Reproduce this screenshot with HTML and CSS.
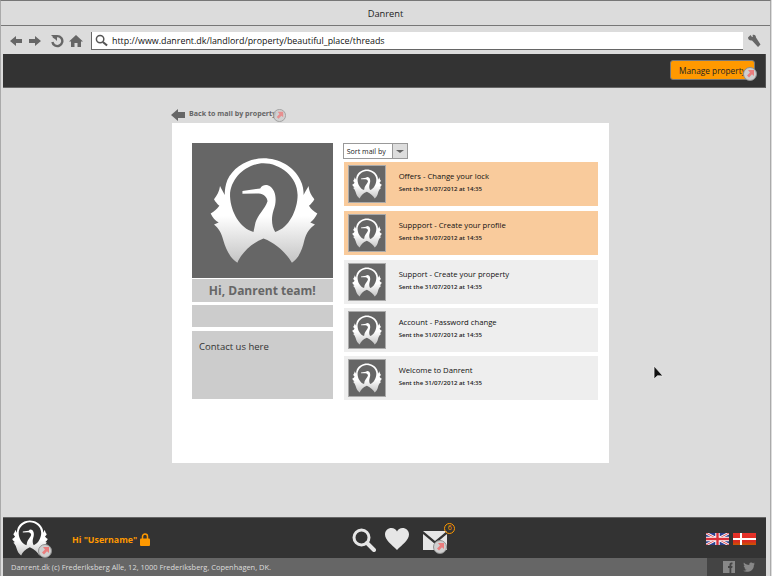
FILE: index.html
```html
<!DOCTYPE html>
<html lang="en">
<head>
<meta charset="utf-8">
<title>Danrent</title>
<link rel="stylesheet" href="styles.css">
</head>
<body>
<svg class="defs" width="0" height="0" aria-hidden="true">
  <defs>
    <linearGradient id="swanfill" x1="0" y1="0" x2="0" y2="1">
      <stop offset="0" stop-color="#fff"/>
      <stop offset="0.55" stop-color="#fff"/>
      <stop offset="1" stop-color="#c4c4c4"/>
    </linearGradient>
    <symbol id="swan" viewBox="90 66 323 320">
      <path fill="url(#swanfill)" fill-rule="evenodd" d="M250 70C205 70 160 95 142 135C136 150 134 165 134 180C130 170 124 162 120 153C118 170 110 182 102 192C106 200 112 206 118 212C110 222 102 230 92 235C98 248 106 256 116 262L102 268C116 280 124 292 130 316C138 345 152 370 172 382C182 358 208 326 250 310C292 326 322 360 335 382C354 370 366 345 372 316C378 292 388 280 404 268L390 262C398 256 405 246 411 235C402 230 392 222 386 212C392 206 398 200 402 192C394 182 386 170 385 153C380 162 374 170 370 180C370 165 368 150 360 135C342 95 295 70 250 70ZM250 85C300 85 352 125 352 180C352 225 325 280 285 290C275 275 272 250 280 225C288 205 288 185 282 170C274 150 252 142 240 160L187 168L187 176L236 175C250 175 262 188 262 198C255 220 232 240 226 262L220 290C180 280 152 230 150 185C148 130 200 85 250 85Z"/>
    </symbol>
    <symbol id="linkbadge" viewBox="0 0 14 14">
      <circle cx="7" cy="7" r="6.5" fill="#cfcfcf" stroke="#8f8f8f"/>
      <path fill="#ea7d7d" d="M5 3h6v6l-2-1.700-3 3.200-2-2 3-3.100z"/>
    </symbol>
  </defs>
</svg>
<div class="window">
  <header class="titlebar">Danrent</header>
  <div class="toolbar">
    <svg class="tool" viewBox="0 0 14 14"><path fill="#666" d="M1 7l6-5v3h6v4H7v3z"/></svg>
    <svg class="tool" viewBox="0 0 14 14"><path fill="#666" d="M13 7L7 2v3H1v4h6v3z"/></svg>
    <svg class="tool tool-gap" viewBox="0 0 14 14"><path fill="none" stroke="#666" stroke-width="2.400" d="M3.400 4a5 5 0 1 1-1 4"/><path fill="#666" d="M1 1h6v6z"/></svg>
    <svg class="tool" viewBox="0 0 14 14"><path fill="#666" d="M7 1L0 7.500h2V13h3.500V9h3v4H12V7.500h2z"/></svg>
    <div class="address">
      <svg class="addr-icon" viewBox="0 0 14 14"><circle cx="5.500" cy="5.500" r="4" fill="none" stroke="#555" stroke-width="1.600"/><path stroke="#555" stroke-width="2.200" d="M8.500 8.500l4.500 4"/></svg>
      <span>http://www.danrent.dk/landlord/property/beautiful_place/threads</span>
    </div>
    <svg class="wrench" viewBox="0 0 14 14"><path fill="#666" d="M1 3.500L3.500 1 5 3l1-.5L5.500 1c2-.8 3.500.5 3.500 2.500L13.500 10.500 11 13 5 6.500C3 7 1 5.500 1 3.500z"/></svg>
  </div>
  <div class="topbar">
    <button class="manage">Manage property<svg class="badge badge-manage"><use href="#linkbadge"/></svg></button>
  </div>
  <main class="stage">
    <div class="column">
      <a class="back">
        <svg class="back-arrow" viewBox="0 0 14 12"><path fill="#666" d="M0 6l7-6v3h7v6H7v3z"/></svg>
        <span class="back-label">Back to mail by property</span>
        <svg class="badge badge-back"><use href="#linkbadge"/></svg>
      </a>
      <section class="card">
        <aside class="side">
          <div class="portrait"><svg class="portrait-swan"><use href="#swan"/></svg></div>
          <div class="hello">Hi, Danrent team!</div>
          <div class="blank"></div>
          <div class="contact">Contact us here</div>
        </aside>
        <div class="mail">
          <div class="sort"><span class="sort-label">Sort mail by</span><span class="sort-btn"><i class="caret"></i></span></div>
          <ul class="threads">
            <li class="thread unread"><div class="thumb"><svg class="thumb-swan"><use href="#swan"/></svg></div><div class="thread-text"><div class="subject">Offers - Change your lock</div><div class="sent">Sent the 31/07/2012 at 14:35</div></div></li>
            <li class="thread unread"><div class="thumb"><svg class="thumb-swan"><use href="#swan"/></svg></div><div class="thread-text"><div class="subject">Suppport - Create your profile</div><div class="sent">Sent the 31/07/2012 at 14:35</div></div></li>
            <li class="thread"><div class="thumb"><svg class="thumb-swan"><use href="#swan"/></svg></div><div class="thread-text"><div class="subject">Support - Create your property</div><div class="sent">Sent the 31/07/2012 at 14:35</div></div></li>
            <li class="thread"><div class="thumb"><svg class="thumb-swan"><use href="#swan"/></svg></div><div class="thread-text"><div class="subject">Account - Password change</div><div class="sent">Sent the 31/07/2012 at 14:35</div></div></li>
            <li class="thread"><div class="thumb"><svg class="thumb-swan"><use href="#swan"/></svg></div><div class="thread-text"><div class="subject">Welcome to Danrent</div><div class="sent">Sent the 31/07/2012 at 14:35</div></div></li>
          </ul>
        </div>
      </section>
    </div>
    <svg class="cursor" viewBox="0 0 12 16"><path fill="#111" stroke="#eee" stroke-width="0.800" d="M1 1v13l3.500-3.200 5.500.2z"/></svg>
  </main>
  <footer class="footer">
    <div class="footer-main">
      <div class="footer-logo"><svg class="footer-swan"><use href="#swan"/></svg><svg class="badge badge-logo"><use href="#linkbadge"/></svg></div>
      <div class="greeting">Hi "Username"</div>
      <svg class="lock" viewBox="0 0 10 13"><path fill="none" stroke="#f90" stroke-width="1.500" d="M2.500 6V3.500a2.500 2.500 0 0 1 5 0V6"/><rect y="5.500" width="10" height="7.500" rx="1" fill="#f90"/></svg>
      <nav class="actions">
        <svg class="act-search" viewBox="0 0 24 24"><circle cx="9.500" cy="9.500" r="7.500" fill="none" stroke="#e6e6e6" stroke-width="3"/><path stroke="#e6e6e6" stroke-width="4" stroke-linecap="round" d="M15 15l7 7"/></svg>
        <svg class="act-heart" viewBox="0 0 24 22"><path fill="#e6e6e6" d="M12 22C7 17 0 12 0 6.500 0 2.500 3 0 6.500 0 9 0 11 1.500 12 3.500 13 1.500 15 0 17.500 0 21 0 24 2.500 24 6.500 24 12 17 17 12 22z"/></svg>
        <div class="act-mail">
          <svg class="envelope" viewBox="0 0 24 19"><path fill="#e6e6e6" d="M0 0h24L12 10zM0 3l12 10L24 3v16H0z"/></svg>
          <span class="count">6</span>
          <svg class="badge badge-mail"><use href="#linkbadge"/></svg>
        </div>
      </nav>
      <div class="flags">
        <svg class="flag" viewBox="0 0 23 12"><rect width="23" height="12" fill="#2b3f8f"/><path stroke="#fff" stroke-width="2.600" d="M0 0l23 12M23 0L0 12"/><path stroke="#d8303a" stroke-width="0.900" d="M0 0l23 12M23 0L0 12"/><path stroke="#fff" stroke-width="4.400" d="M11.500 0v12M0 6h23"/><path stroke="#d8303a" stroke-width="2.400" d="M11.500 0v12M0 6h23"/></svg>
        <svg class="flag" viewBox="0 0 23 12"><defs><linearGradient id="dk" x1="0" y1="0" x2="0" y2="1"><stop offset="0" stop-color="#e8342c"/><stop offset="0.7" stop-color="#d92a20"/><stop offset="1" stop-color="#c85a00"/></linearGradient></defs><rect width="23" height="12" fill="url(#dk)"/><path stroke="#fff" stroke-width="2" d="M8 0v12M0 6h23"/></svg>
      </div>
    </div>
    <div class="footer-strip">
      <div class="address-line">Danrent.dk (c) Frederiksberg Alle, 12, 1000 Frederiksberg, Copenhagen, DK.</div>
      <div class="social">
        <svg class="fb" viewBox="0 0 12 12"><rect width="12" height="12" fill="#888"/><path fill="#444" d="M6.500 12V7H5V5h1.500V3.500C6.500 2 7.500 1.500 9.500 1.500V3.300C8.500 3.300 8.300 3.500 8.300 4V5h1.200L9.200 7H8.300v5z"/></svg>
        <svg class="tw" viewBox="0 0 12 10"><path fill="#888" d="M12 1.500l-1.400.4.900-1.400-1.500.7C9 0 7 .3 6.500 1.500 6.200 2.200 6.300 2.800 6.300 3 4 3 2 2 .9.500 .3 2 .8 3.200 1.800 4L.7 3.700c0 1.200 1 2.200 2 2.500H1.600c.3 1 1.200 1.500 2.200 1.600C2.800 8.600 1.400 9 0 8.800 4 11 11 9.500 10.900 3z"/></svg>
      </div>
    </div>
  </footer>
</div>
</body>
</html>
```
FILE: styles.css
```css
* { box-sizing: border-box; }
html, body { margin: 0; padding: 0; }
body {
  width: 772px;
  height: 576px;
  overflow: hidden;
  background: #dcdcdc;
  font-family: "Open Sans", sans-serif;
  color: #222;
}
.defs { position: absolute; }
.window {
  width: 771px;
  height: 576px;
  border-top: 1px solid #777;
  border-right: 1px solid #aaa;
  border-left: 1px solid #aaa;
  display: flex;
  flex-direction: column;
}
.titlebar {
  height: 25px;
  flex: none;
  border-bottom: 1px solid #777;
  display: flex;
  align-items: center;
  justify-content: center;
  font-size: 9.300px;
}
.toolbar {
  height: 28px;
  flex: none;
  display: flex;
  align-items: center;
  padding: 2px 0 0 8px;
}
.tool { width: 14px; height: 14px; margin-right: 5px; flex: none; }
.tool-gap { margin-left: 3px; }
.address {
  width: 652px;
  height: 18px;
  margin-left: 3px;
  background: #fff;
  border-left: 1px solid #666;
  border-bottom: 1px solid #666;
  display: flex;
  align-items: center;
  padding-left: 3px;
  font-size: 8.900px;
  color: #111;
}
.addr-icon { width: 13px; height: 13px; margin-right: 4px; }
.wrench { width: 14px; height: 14px; margin-left: 4px; }
.topbar {
  height: 34px;
  flex: none;
  margin-left: 2px;
  width: 763px;
  background: #333;
  border-right: 1px solid #555;
  border-bottom: 1px solid #666;
  display: flex;
  justify-content: flex-end;
  padding: 6px 10px 0 0;
}
.manage {
  position: relative;
  width: 85px;
  height: 20px;
  padding: 0 0 0 8px;
  border: 1px solid #777;
  border-radius: 3px;
  background: #f90;
  color: #222;
  font: 8.300px "Open Sans", sans-serif;
  text-align: left;
}
.badge { position: absolute; width: 14px; height: 14px; }
.badge-manage { right: -3px; bottom: -2px; }
.stage {
  position: relative;
  flex: 1;
  min-height: 0;
  padding-top: 18px;
  display: flex;
  justify-content: flex-start;
  padding-left: 171px;
}
.column { width: 437px; }
.back {
  position: relative;
  height: 17px;
  display: flex;
  align-items: center;
  font-size: 7.100px;
  font-weight: bold;
  color: #666;
}
.back-label { margin-top: -3px; }
.back-arrow { width: 14px; height: 12px; margin: 1px 4px 0 -1px; }
.badge-back { width: 13px; height: 13px; left: 101px; top: 3px; opacity: 0.8; }
.card {
  width: 437px;
  height: 340px;
  background: #fff;
  display: flex;
  padding: 20px 11px 0 20px;
  gap: 10px;
}
.side { width: 141px; display: flex; flex-direction: column; }
.portrait {
  height: 135px;
  background: #666;
  display: flex;
  align-items: center;
  justify-content: center;
}
.portrait-swan { width: 108px; height: 107px; margin-left: 4px; }
.hello {
  height: 23px;
  margin-top: 1px;
  background: #ccc;
  color: #666;
  font-size: 12px;
  font-weight: bold;
  display: flex;
  align-items: center;
  justify-content: center;
}
.blank { height: 22px; margin-top: 3px; background: #ccc; }
.contact {
  height: 68px;
  margin-top: 4px;
  background: #ccc;
  padding: 9px 7px;
  font-size: 9.500px;
  color: #333;
}
.mail { width: 255px; margin-left: 1px; }
.sort {
  width: 65px;
  height: 16px;
  margin-left: -1px;
  display: flex;
  border: 1px solid #999;
  font-size: 7.100px;
  background: #fff;
}
.sort-label { flex: 1; display: flex; align-items: center; padding-left: 3px; }
.sort-btn {
  width: 15px;
  background: #ddd;
  border-left: 1px solid #999;
  display: flex;
  align-items: center;
  justify-content: center;
}
.caret { width: 0; height: 0; border: 4px solid transparent; border-top: 3px solid #666; border-bottom: 0; }
.threads {
  list-style: none;
  margin: 3px 0 0;
  padding: 0;
  display: flex;
  flex-direction: column;
  gap: 5px;
}
.thread {
  width: 254px;
  height: 44px;
  background: #eee;
  display: flex;
  align-items: center;
  padding-left: 4px;
}
.thread:nth-child(n+3) { margin-bottom: -1px; }
.unread { background: #f9cb9c; }
.thumb {
  width: 38px;
  height: 38px;
  background: #666;
  border: 1px solid #aaa;
  display: flex;
  align-items: center;
  justify-content: center;
}
.thumb-swan { width: 30px; height: 30px; }
.thread-text { margin-left: 13px; margin-top: -5px; }
.subject { font-size: 7.700px; color: #111; line-height: 12px; }
.sent { font-size: 6.100px; font-weight: 600; color: #222; margin-top: 3px; line-height: 8px; }
.cursor { position: absolute; left: 652px; top: 277px; width: 12px; height: 16px; }
.footer { flex: none; }
.footer-main {
  height: 41px;
  margin-left: 2px;
  width: 763px;
  background: #333;
  border-top: 1px solid #666;
  display: flex;
  align-items: center;
  position: relative;
}
.footer-logo { position: relative; width: 36px; height: 36px; margin-left: 9px; }
.footer-swan { width: 36px; height: 36px; }
.badge-logo { right: -4px; bottom: -2px; }
.greeting { margin-left: 24px; color: #f90; font-size: 8.800px; font-weight: bold; padding-top: 4px; }
.lock { width: 10px; height: 13px; margin-left: 3px; margin-top: 2px; }
.actions { display: flex; align-items: center; margin-left: 202px; }
.act-search { width: 24px; height: 24px; margin-top: 3px; }
.act-heart { width: 24px; height: 22px; margin-left: 9px; margin-top: 2px; }
.act-mail { position: relative; width: 24px; height: 19px; margin-left: 14px; margin-top: 4px; }
.envelope { width: 24px; height: 19px; display: block; }
.count {
  position: absolute;
  left: 21px;
  top: -8px;
  width: 11px;
  height: 11px;
  border: 1.500px solid #f90;
  border-radius: 50%;
  color: #f90;
  font-size: 7px;
  line-height: 8px;
  text-align: center;
}
.badge-mail { left: 10px; top: 9px; }
.flags { display: flex; gap: 4px; margin-left: auto; margin-right: 10px; margin-top: 2px; }
.flag { width: 23px; height: 12px; display: block; }
.footer-strip {
  height: 18px;
  margin-left: 2px;
  width: 763px;
  background: #666;
  display: flex;
  align-items: center;
  justify-content: space-between;
}
.address-line { padding-left: 8px; color: #ddd; font-size: 7.450px; }
.social {
  width: 59px;
  height: 18px;
  background: #444;
  display: flex;
  align-items: center;
  padding-left: 16px;
  gap: 8px;
}
.fb { width: 12px; height: 12px; }
.tw { width: 12px; height: 10px; }
```
